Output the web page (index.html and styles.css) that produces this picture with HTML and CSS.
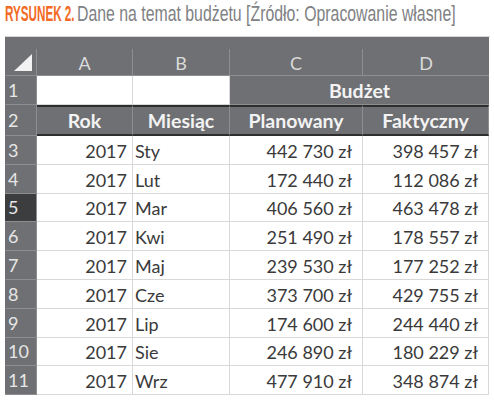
FILE: index.html
```html
<!DOCTYPE html>
<html lang="pl">
<head>
<meta charset="utf-8">
<link rel="stylesheet" href="styles.css">
</head>
<body>
<div class="page">
  <div class="title">
    <div class="label-box"><span class="label">RYSUNEK 2.</span></div>
    <div class="caption-box"><span class="caption">Dane na temat budżetu [Źródło: Opracowanie własne]</span></div>
  </div>
  <div class="sheet">
    <div class="strip"></div>
    <div class="corner"><span class="tri"></span></div>
    <div class="colh">A</div>
    <div class="colh">B</div>
    <div class="colh">C</div>
    <div class="colh last">D</div>

    <div class="rn">1</div>
    <div class="c"></div>
    <div class="c"></div>
    <div class="hd merged">Budżet</div>

    <div class="rn">2</div>
    <div class="hd h2">Rok</div>
    <div class="hd h2">Miesiąc</div>
    <div class="hd h2">Planowany</div>
    <div class="hd h2 last">Faktyczny</div>

    <div class="rn">3</div><div class="c n">2017</div><div class="c t">Sty</div><div class="c m">442 730 zł</div><div class="c m">398 457 zł</div>
    <div class="rn">4</div><div class="c n">2017</div><div class="c t">Lut</div><div class="c m">172 440 zł</div><div class="c m">112 086 zł</div>
    <div class="rn sel">5</div><div class="c n">2017</div><div class="c t">Mar</div><div class="c m">406 560 zł</div><div class="c m">463 478 zł</div>
    <div class="rn">6</div><div class="c n">2017</div><div class="c t">Kwi</div><div class="c m">251 490 zł</div><div class="c m">178 557 zł</div>
    <div class="rn">7</div><div class="c n">2017</div><div class="c t">Maj</div><div class="c m">239 530 zł</div><div class="c m">177 252 zł</div>
    <div class="rn">8</div><div class="c n">2017</div><div class="c t">Cze</div><div class="c m">373 700 zł</div><div class="c m">429 755 zł</div>
    <div class="rn">9</div><div class="c n">2017</div><div class="c t">Lip</div><div class="c m">174 600 zł</div><div class="c m">244 440 zł</div>
    <div class="rn">10</div><div class="c n">2017</div><div class="c t">Sie</div><div class="c m">246 890 zł</div><div class="c m">180 229 zł</div>
    <div class="rn">11</div><div class="c n">2017</div><div class="c t">Wrz</div><div class="c m">477 910 zł</div><div class="c m">348 874 zł</div>
  </div>
</div>
</body>
</html>
```
FILE: styles.css
```css
* { box-sizing: border-box; }
html, body { margin: 0; padding: 0; background: #fff; }
.page { width: 494px; height: 404px; padding: 0 4px 0 5px; overflow: hidden; }

.title {
  height: 37px;
  padding-top: 1px;
  display: flex;
  font-family: "Liberation Sans", Arial, sans-serif;
  font-size: 22px;
  line-height: 26px;
  white-space: nowrap;
  border-bottom: 1px solid #d6d6d6;
}
.label-box { width: 72px; flex: none; }
.caption-box { flex: 1; }
.label {
  display: inline-block;
  color: #f26a25;
  font-weight: bold;
  transform: scaleX(0.53);
  transform-origin: left center;
}
.caption {
  display: inline-block;
  color: #808184;
  transform: scaleX(0.72);
  transform-origin: left center;
}

.sheet {
  display: grid;
  grid-template-columns: 32px 96px 97px 133px 126px;
  grid-template-rows: 12px 27px 29px 31px repeat(9, 28.8px);
  font-family: Lato, "Open Sans", sans-serif;
  font-size: 18px;
  color: #3a3a3a;
}
.strip { grid-column: 1 / -1; background: #6f7073; }
.corner {
  background: #6f7073;
  border-right: 1px solid #8d8e90;
  border-bottom: 1px solid #8d8e90;
  display: flex;
  align-items: flex-end;
  justify-content: flex-end;
  padding: 0 4px 4px 0;
}
.tri {
  width: 18px; height: 17px;
  background: #f2f2f2;
  clip-path: polygon(100% 0, 100% 100%, 0 100%);
}
.colh {
  background: #6f7073;
  color: #dadada;
  border-right: 1px solid #8d8e90;
  border-bottom: 1px solid #8d8e90;
  display: flex; align-items: center; justify-content: center;
  padding-top: 1px;
}
.last { border-right: none; }
.rn {
  background: #6f7073;
  color: #e6e6e6;
  border-right: 1px solid #8d8e90;
  border-bottom: 1px solid #8d8e90;
  padding-left: 3px;
  display: flex; align-items: center;
}
.rn.sel { background: #3c3d3f; }
.c {
  background: #fff;
  border-right: 1px solid #d8d8d8;
  border-bottom: 1px solid #d8d8d8;
  display: flex; align-items: center;
  padding-top: 2px;
  white-space: nowrap;
}
.n { justify-content: flex-end; padding-right: 5px; }
.t { padding-left: 2px; }
.m { justify-content: flex-end; padding-right: 10px; }
.hd {
  background: #6f7073;
  color: #f3f3f3;
  font-weight: bold;
  font-size: 19.5px;
  display: flex; align-items: center; justify-content: center;
  border-right: 1px solid #8d8e90;
  white-space: nowrap;
}
.merged { grid-column: 4 / 6; border-right: none; border-bottom: 1px solid #8d8e90; }
.h2 { border-top: 2px solid #2e2e2e; border-bottom: 2px solid #2e2e2e; }
```
